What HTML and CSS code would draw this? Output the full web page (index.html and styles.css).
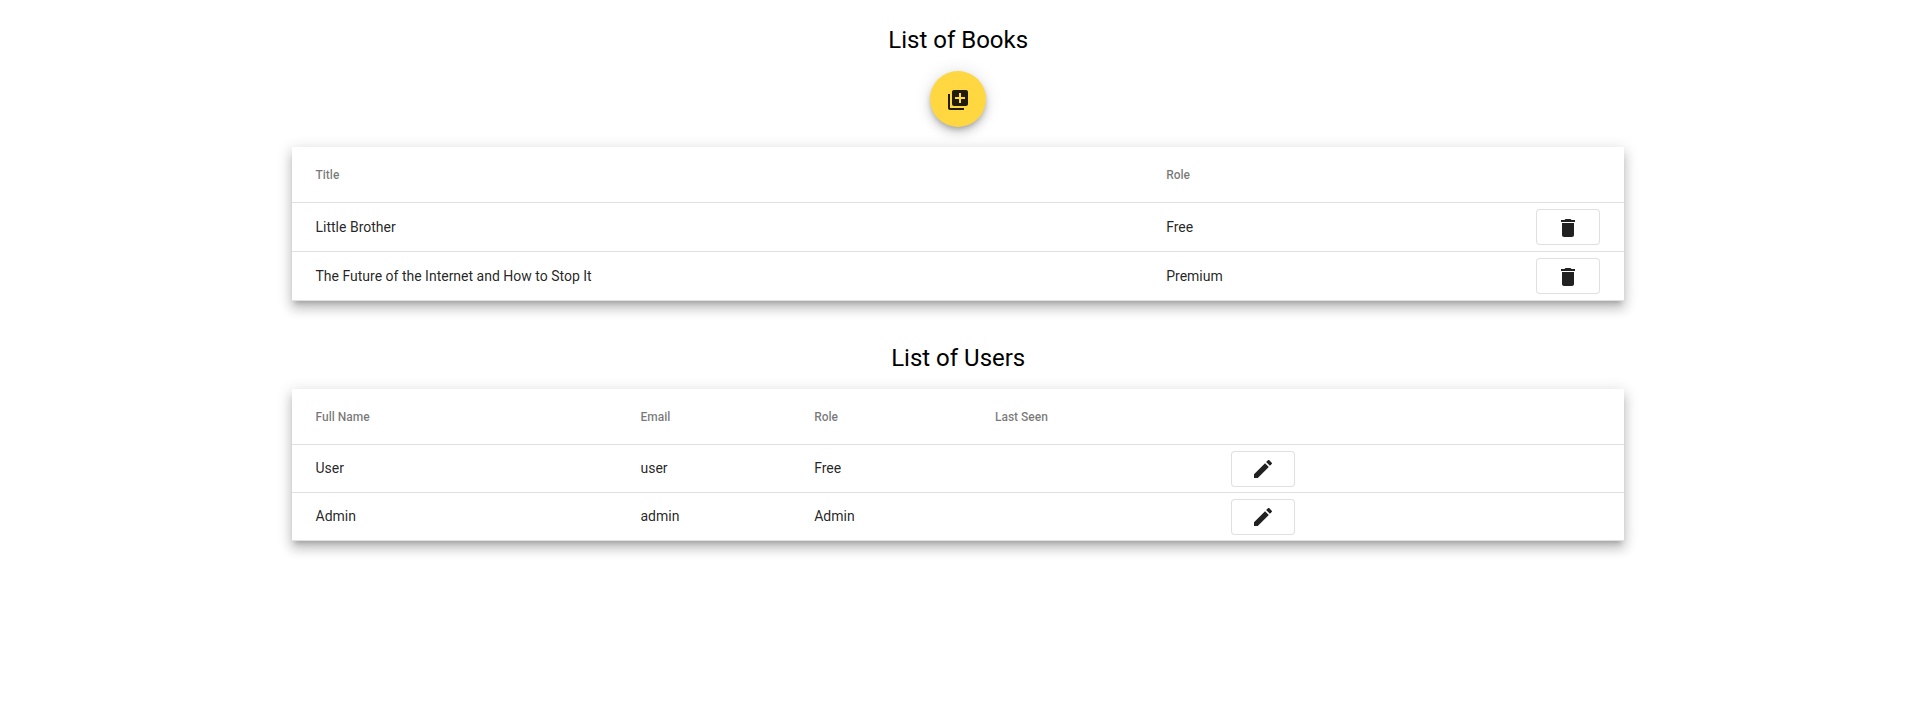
FILE: index.html
```html
<!DOCTYPE html>
<html lang="en">
<head>
<meta charset="utf-8">
<title>Library administration</title>
<link rel="stylesheet" href="styles.css">
</head>
<body>
<main class="page">
  <section class="section">
    <h1 class="headline">List of Books</h1>
    <button class="fab" aria-label="Add book">
      <svg class="icon" viewBox="0 0 24 24"><path d="M4 6H2v14c0 1.100.9 2 2 2h14v-2H4V6zm16-4H8c-1.100 0-2 .9-2 2v12c0 1.100.9 2 2 2h12c1.100 0 2-.9 2-2V4c0-1.100-.9-2-2-2zm-1 9h-4v4h-2v-4H9V9h4V5h2v4h4v2z"/></svg>
    </button>
    <div class="table books">
      <div class="row head"><span>Title</span><span>Role</span><span></span></div>
      <div class="row">
        <span>Little Brother</span><span>Free</span>
        <button class="action" aria-label="Delete"><svg class="icon" viewBox="0 0 24 24"><path d="M6 19c0 1.100.9 2 2 2h8c1.100 0 2-.9 2-2V7H6v12zM19 4h-3.500l-1-1h-5l-1 1H5v2h14V4z"/></svg></button>
      </div>
      <div class="row">
        <span>The Future of the Internet and How to Stop It</span><span>Premium</span>
        <button class="action" aria-label="Delete"><svg class="icon" viewBox="0 0 24 24"><path d="M6 19c0 1.100.9 2 2 2h8c1.100 0 2-.9 2-2V7H6v12zM19 4h-3.500l-1-1h-5l-1 1H5v2h14V4z"/></svg></button>
      </div>
    </div>
  </section>
  <section class="section">
    <h1 class="headline">List of Users</h1>
    <div class="table users">
      <div class="row head"><span>Full Name</span><span>Email</span><span>Role</span><span>Last Seen</span><span></span></div>
      <div class="row">
        <span>User</span><span>user</span><span>Free</span><span></span>
        <button class="action" aria-label="Edit"><svg class="icon" viewBox="0 0 24 24"><path d="M3 17.250V21h3.750L17.810 9.940l-3.750-3.750L3 17.250zM20.710 7.040c.39-.39.39-1.020 0-1.410l-2.340-2.340c-.39-.39-1.020-.39-1.410 0l-1.830 1.830 3.750 3.750 1.830-1.830z"/></svg></button>
      </div>
      <div class="row">
        <span>Admin</span><span>admin</span><span>Admin</span><span></span>
        <button class="action" aria-label="Edit"><svg class="icon" viewBox="0 0 24 24"><path d="M3 17.250V21h3.750L17.810 9.940l-3.750-3.750L3 17.250zM20.710 7.040c.39-.39.39-1.020 0-1.410l-2.340-2.340c-.39-.39-1.020-.39-1.410 0l-1.830 1.830 3.750 3.750 1.830-1.830z"/></svg></button>
      </div>
    </div>
  </section>
</main>
</body>
</html>
```
FILE: styles.css
```css
body {
  margin: 0;
  background: #fff;
  font-family: Roboto, sans-serif;
  color: #000;
}
.page {
  box-sizing: border-box;
  width: 1332px;
  min-height: 100vh;
  margin-left: 292px;
  padding-top: 24px;
  display: flex;
  flex-direction: column;
  gap: 41px;
}
.section {
  display: flex;
  flex-direction: column;
  align-items: center;
}
.headline {
  margin: 0 0 15px;
  padding-left: .4px;
  font-size: 24px;
  line-height: 32px;
  font-weight: 400;
}
.icon {
  display: block;
  width: 24px;
  height: 24px;
  fill: currentColor;
}
.fab {
  display: flex;
  align-items: center;
  justify-content: center;
  box-sizing: border-box;
  width: 56px;
  height: 56px;
  margin: 0 0 20px;
  padding: 2px 0 0;
  border: 0;
  border-radius: 50%;
  background: #ffd740;
  color: rgba(0, 0, 0, .87);
  box-shadow: 0 3px 5px -1px rgba(0, 0, 0, .2), 0 6px 10px 0 rgba(0, 0, 0, .14), 0 1px 18px 0 rgba(0, 0, 0, .12);
}
.table {
  width: 100%;
  background: #fff;
  box-shadow: 0 5px 5px -3px rgba(0, 0, 0, .2), 0 8px 10px 1px rgba(0, 0, 0, .14), 0 3px 14px 2px rgba(0, 0, 0, .12);
}
.row {
  display: grid;
  align-items: center;
  box-sizing: border-box;
  height: 48px;
  padding: 0 23.5px;
  border-bottom: 1px solid rgba(0, 0, 0, .12);
  font-size: 14px;
  line-height: 16px;
  color: rgba(0, 0, 0, .87);
}
.books .row {
  height: 49px;
  grid-template-columns: 850.7px 369.8px 64px;
}
.users .row {
  grid-template-columns: 325px 173.7px 180.8px 236px 64px;
}
.users .row:not(.head) span {
  padding-bottom: 2px;
}
.table .head {
  height: 56px;
  font-size: 12px;
  font-weight: 500;
  color: rgba(0, 0, 0, .54);
}
.action {
  display: flex;
  align-items: center;
  justify-content: center;
  box-sizing: border-box;
  width: 64px;
  height: 36px;
  padding: 0;
  border: 1px solid rgba(0, 0, 0, .12);
  border-radius: 4px;
  background: #fff;
  color: rgba(0, 0, 0, .87);
}
.books .action {
  padding-top: 2px;
}
```
